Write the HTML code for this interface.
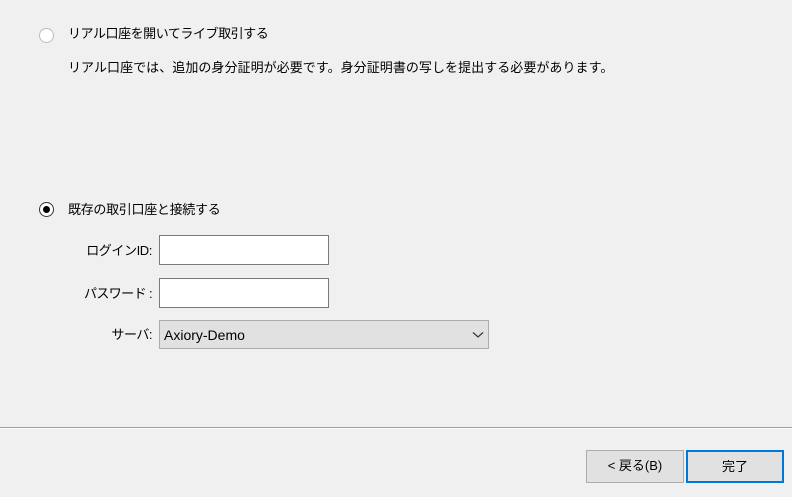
<!DOCTYPE html>
<html><head><meta charset="utf-8"><style>
*{margin:0;padding:0;box-sizing:border-box}
body{width:792px;height:497px;background:#f0f0f0;font-family:"Liberation Sans","Noto Sans CJK JP",sans-serif;font-size:13px;color:#000;position:relative;overflow:hidden}
.a{position:absolute;white-space:nowrap;line-height:16px}
.r{position:absolute;white-space:nowrap;line-height:16px;text-align:right;width:150px;left:2px}
.radio{position:absolute;width:15px;height:15px;border-radius:50%;border:1px solid #333;background:#fff}
.radio.dis{border-color:#bcbcbc}
.radio .dot{position:absolute;left:3px;top:3px;width:7px;height:7px;border-radius:50%;background:#000}
.inp{position:absolute;background:#fff;border:1px solid #7a7a7a}
.btn{position:absolute;border:1px solid #adadad;background:#e1e1e1;text-align:center;line-height:30px}
</style></head><body>
<div class="radio dis" style="left:39px;top:28px"></div>
<div class="a" style="left:68px;top:26px;letter-spacing:-0.45px">リアル口座を開いてライブ取引する</div>
<div class="a" style="left:68px;top:60px;letter-spacing:0.05px">リアル口座では、追加の身分証明が必要です。身分証明書の写しを提出する必要があります。</div>
<div class="radio" style="left:39px;top:202px"><div class="dot"></div></div>
<div class="a" style="left:68px;top:202px;letter-spacing:-0.3px">既存の取引口座と接続する</div>
<div class="r" style="top:243px;letter-spacing:-0.4px">ログインID:</div>
<div class="inp" style="left:159px;top:235px;width:170px;height:30px"></div>
<div class="r" style="top:286px;letter-spacing:-0.6px">パスワード :</div>
<div class="inp" style="left:159px;top:278px;width:170px;height:30px"></div>
<div class="r" style="top:327px;letter-spacing:-0.5px">サーバ:</div>
<div style="position:absolute;left:159px;top:320px;width:330px;height:29px;background:#e1e1e1;border:1px solid #adadad"></div>
<div class="a" style="left:164px;top:327px;font-size:14px">Axiory-Demo</div>
<svg style="position:absolute;left:472px;top:331px" width="12" height="8"><path d="M1 1.5 L6 6 L11 1.5" fill="none" stroke="#333" stroke-width="1.2"/></svg>
<div style="position:absolute;left:0;top:427px;width:792px;height:1px;background:#a0a0a0"></div>
<div style="position:absolute;left:0;top:428px;width:792px;height:1px;background:#fff"></div>
<div class="btn" style="left:586px;top:450px;width:98px;height:33px">&lt; 戻る(B)</div>
<div class="btn" style="left:686px;top:450px;width:98px;height:33px;border:2px solid #0078d7;line-height:29px">完了</div>
</body></html>
